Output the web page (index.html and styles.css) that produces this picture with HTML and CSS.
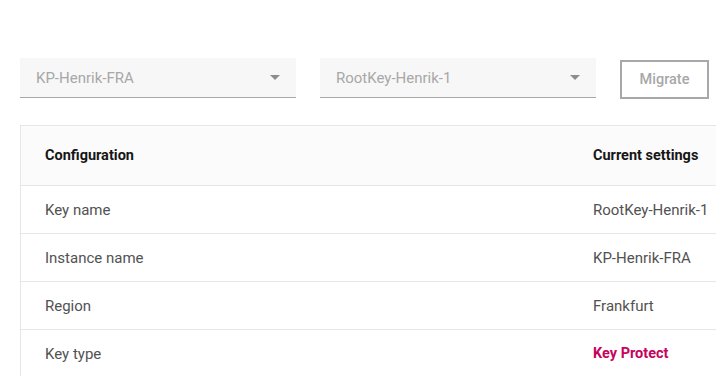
FILE: index.html
```html
<!DOCTYPE html>
<html lang="en">
<head>
    <meta charset="UTF-8">
    <meta name="viewport" content="width=device-width, initial-scale=1.0">
    <title>Key Migration</title>
    <link rel="stylesheet" href="styles.css">
</head>
<body>
    <div class="toolbar">
        <div class="dropdown">
            <span class="dropdown-label">KP-Henrik-FRA</span>
            <svg class="caret" width="10" height="5" viewBox="0 0 10 5"><path d="M0 0h10L5 5z" fill="#8d8d8d"/></svg>
        </div>
        <div class="dropdown">
            <span class="dropdown-label">RootKey-Henrik-1</span>
            <svg class="caret" width="10" height="5" viewBox="0 0 10 5"><path d="M0 0h10L5 5z" fill="#8d8d8d"/></svg>
        </div>
        <button class="migrate-btn" disabled>Migrate</button>
    </div>

    <div class="table">
        <div class="row header">
            <div class="cell">Configuration</div>
            <div class="cell">Current settings</div>
        </div>
        <div class="row">
            <div class="cell">Key name</div>
            <div class="cell">RootKey-Henrik-1</div>
        </div>
        <div class="row">
            <div class="cell">Instance name</div>
            <div class="cell">KP-Henrik-FRA</div>
        </div>
        <div class="row">
            <div class="cell">Region</div>
            <div class="cell">Frankfurt</div>
        </div>
        <div class="row">
            <div class="cell">Key type</div>
            <div class="cell highlight">Key Protect</div>
        </div>
    </div>
</body>
</html>
```

FILE: styles.css
```css
body {
    font-family: Roboto, 'Noto Sans', sans-serif;
    font-size: 15px;
    color: #525252;
    background-color: #fff;
    margin: 0;
    padding: 58px 0 0 20px;
    overflow: hidden;
}

.toolbar {
    display: flex;
    align-items: flex-start;
    gap: 24px;
    margin-bottom: 26px;
}

.dropdown {
    width: 276px;
    height: 40px;
    box-sizing: border-box;
    padding: 0 16px;
    background-color: #f7f7f7;
    border-bottom: 1px solid #a8a8a8;
    display: flex;
    align-items: center;
    justify-content: space-between;
}

.dropdown-label {
    color: #a8a8a8;
}

.migrate-btn {
    margin-top: 2px;
    width: 89px;
    height: 39px;
    border: 2px solid #a8a8a8;
    background-color: #fff;
    color: #a8a8a8;
    font-family: inherit;
    font-size: 14.5px;
    font-weight: 500;
}

.table {
    width: 740px;
    border-top: 1px solid #e6e6e6;
    border-left: 1px solid #e6e6e6;
}

.row {
    display: flex;
    height: 48px;
    align-items: center;
    border-bottom: 1px solid #e6e6e6;
    box-sizing: border-box;
}

.row.header {
    height: 60px;
    background-color: #fbfbfb;
    font-weight: 700;
    font-size: 14.5px;
    color: #161616;
}

.cell {
    padding-left: 24px;
}

.cell:first-child {
    width: 524px;
}

.highlight {
    color: #c6035e;
    font-weight: 700;
    font-size: 14.5px;
}
```
